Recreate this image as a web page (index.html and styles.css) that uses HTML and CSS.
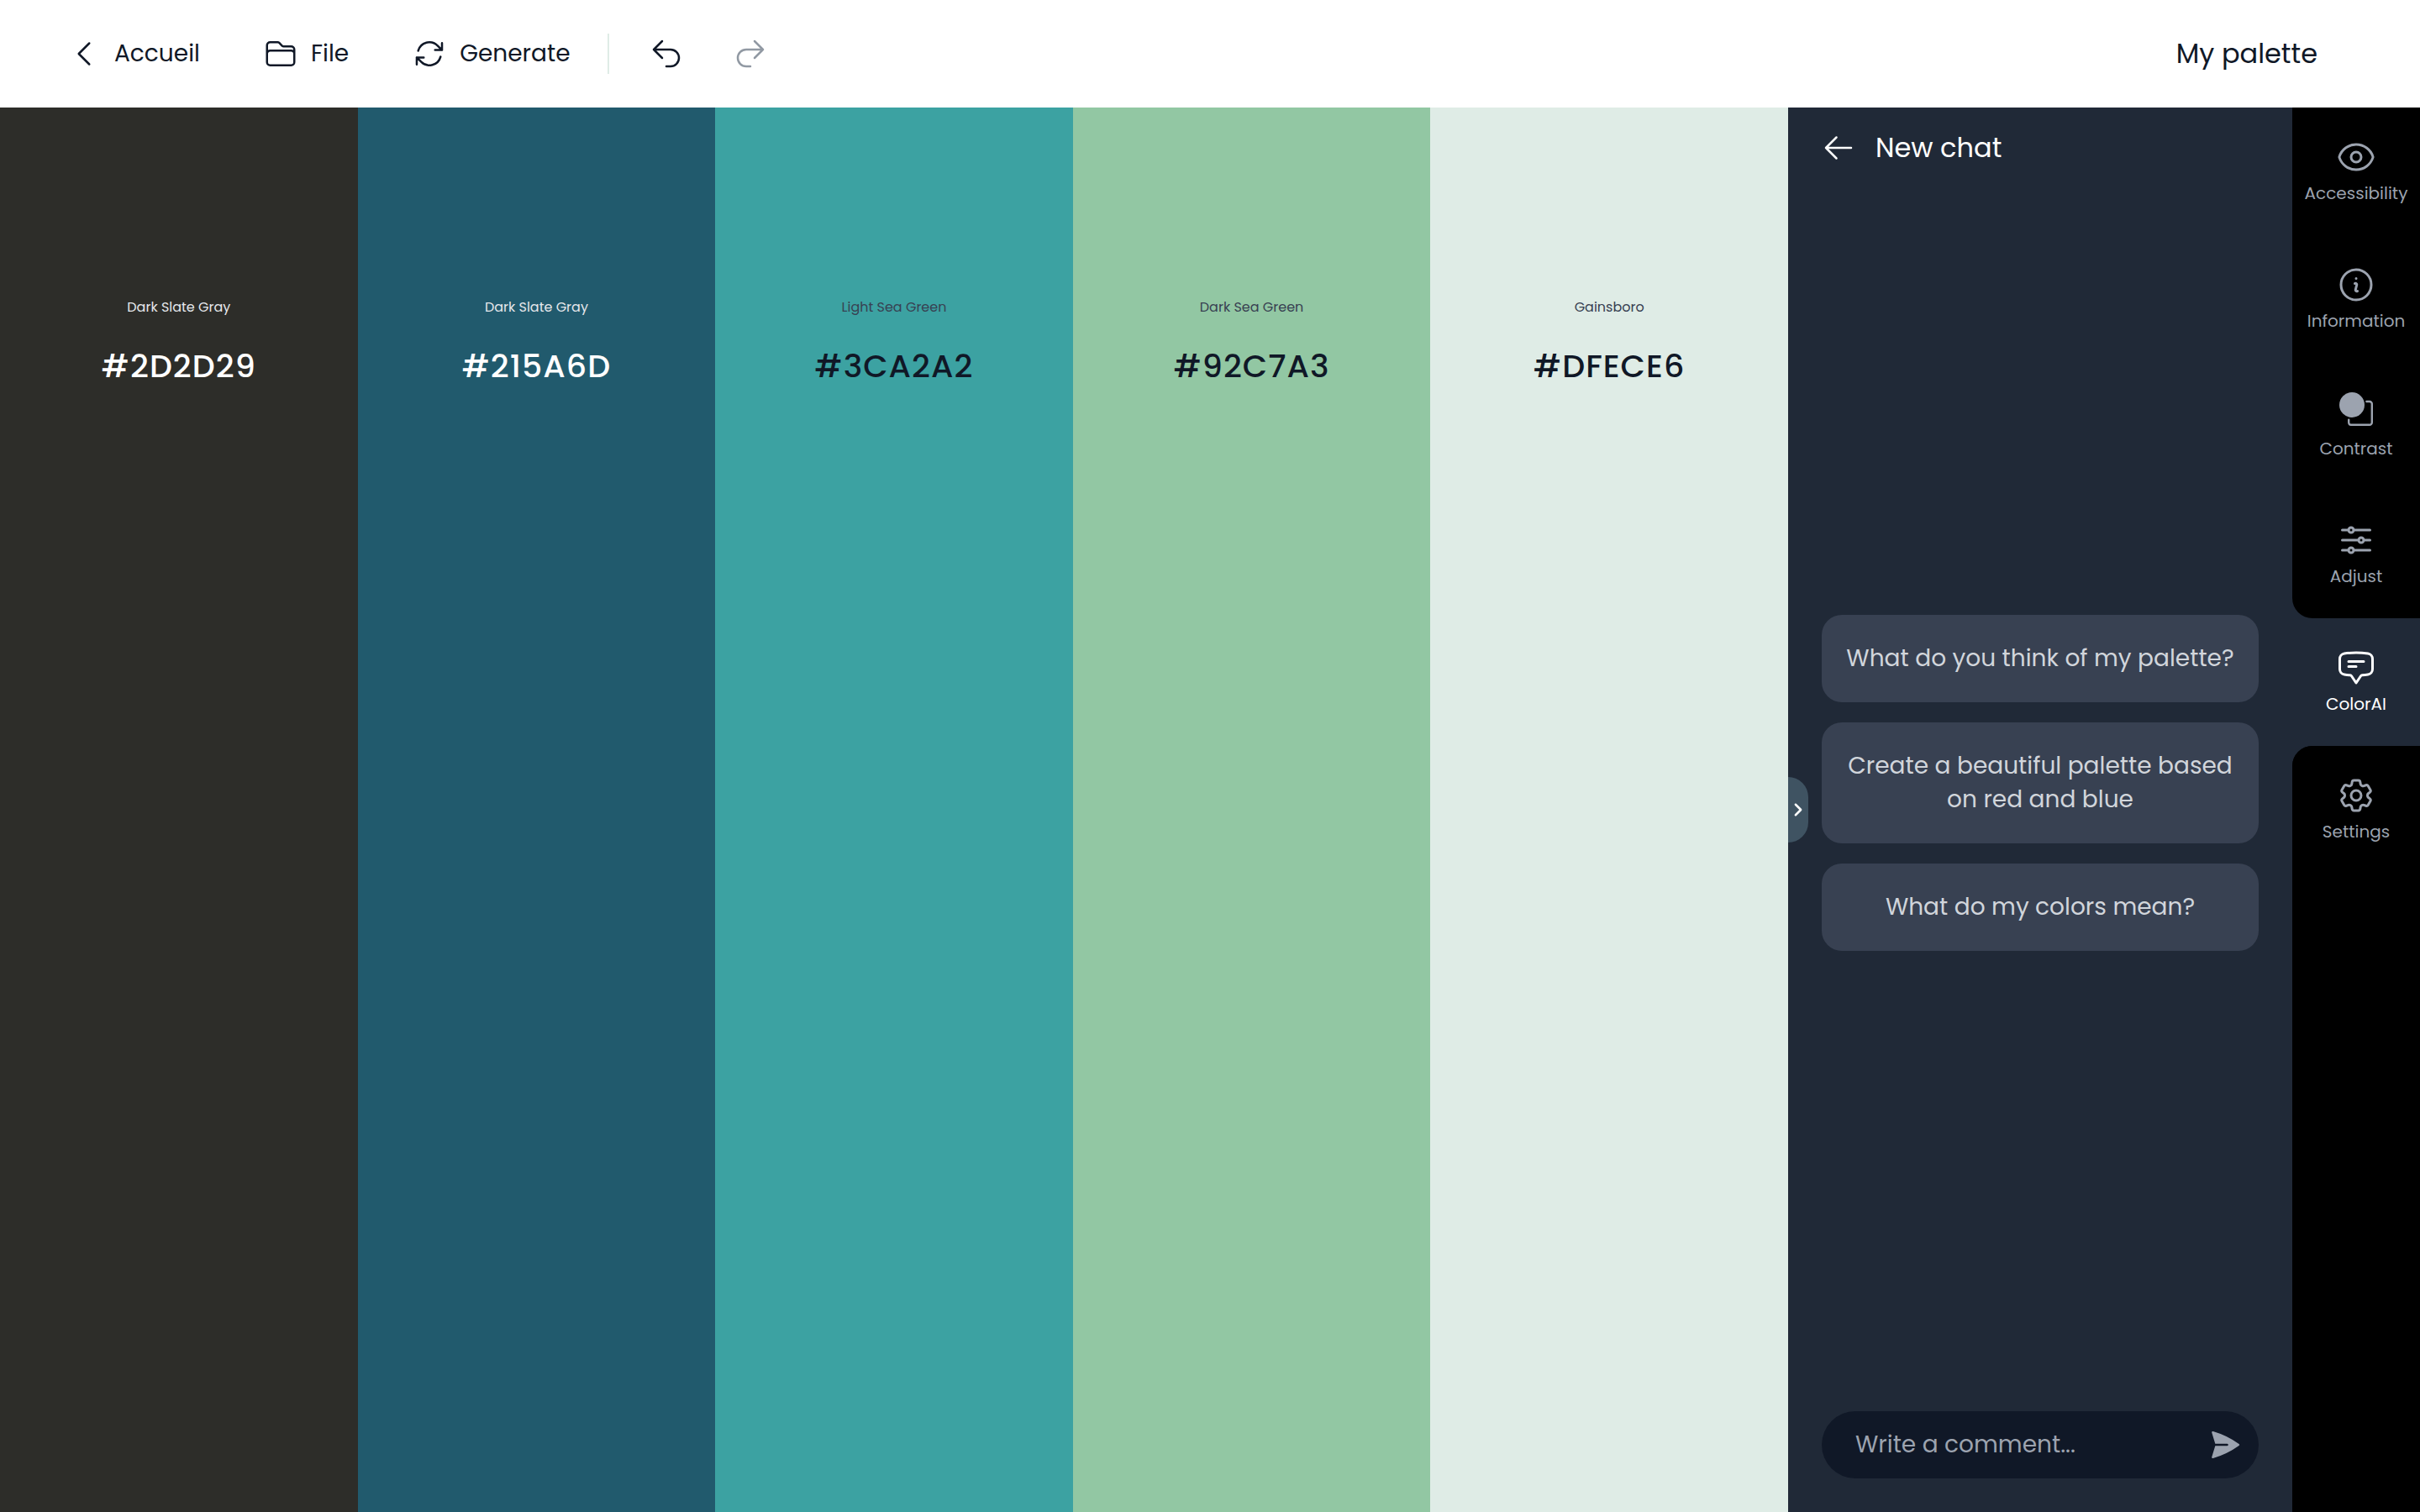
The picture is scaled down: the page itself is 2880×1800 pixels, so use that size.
FILE: index.html
```html
<!DOCTYPE html>
<html lang="en">
<head>
<meta charset="utf-8">
<meta name="viewport" content="width=device-width, initial-scale=1">
<title>My palette</title>
<link rel="stylesheet" href="styles.css">
</head>
<body>
<header class="topbar">
  <nav class="topbar-menu" aria-label="Main">
    <a class="menu-item" href="#">
      <svg class="icon" viewBox="0 0 24 24"><path d="M15.75 19.5 8.25 12l7.5-7.5"/></svg>
      Accueil
    </a>
    <button class="menu-item" type="button">
      <svg class="icon" viewBox="0 0 24 24"><path d="M2.25 12.75V12A2.25 2.25 0 0 1 4.5 9.75h15A2.25 2.25 0 0 1 21.75 12v.75m-8.69-6.44-2.12-2.12a1.5 1.5 0 0 0-1.061-.44H4.5A2.25 2.25 0 0 0 2.25 6v12a2.25 2.25 0 0 0 2.25 2.25h15A2.25 2.25 0 0 0 21.75 18V9a2.25 2.25 0 0 0-2.25-2.25h-5.379a1.5 1.5 0 0 1-1.06-.44Z"/></svg>
      File
    </button>
    <button class="menu-item" type="button">
      <svg class="icon" viewBox="0 0 24 24"><path d="M16.023 9.348h4.992v-.001M2.985 19.644v-4.992m0 0h4.992m-4.993 0 3.181 3.183a8.25 8.25 0 0 0 13.803-3.7M4.031 9.865a8.25 8.25 0 0 1 13.803-3.7l3.181 3.182m0-4.991v4.99"/></svg>
      Generate
    </button>
  </nav>
  <div class="history">
    <button class="history-button" type="button" aria-label="Undo">
      <svg class="icon" viewBox="0 0 24 24"><path d="M9 15 3 9m0 0 6-6M3 9h12a6 6 0 0 1 0 12h-3"/></svg>
    </button>
    <button class="history-button" type="button" aria-label="Redo" disabled>
      <svg class="icon" viewBox="0 0 24 24"><path d="m15 15 6-6m0 0-6-6m6 6H9a6 6 0 0 0 0 12h3"/></svg>
    </button>
  </div>
  <h1 class="palette-name">My palette</h1>
</header>

<div class="workspace">
  <main class="palette">
    <section class="swatch swatch-charcoal">
      <p class="swatch-name">Dark Slate Gray</p>
      <h2 class="swatch-hex">#2D2D29</h2>
    </section>
    <section class="swatch swatch-blue">
      <p class="swatch-name">Dark Slate Gray</p>
      <h2 class="swatch-hex">#215A6D</h2>
    </section>
    <section class="swatch swatch-teal">
      <p class="swatch-name">Light Sea Green</p>
      <h2 class="swatch-hex">#3CA2A2</h2>
    </section>
    <section class="swatch swatch-green">
      <p class="swatch-name">Dark Sea Green</p>
      <h2 class="swatch-hex">#92C7A3</h2>
    </section>
    <section class="swatch swatch-mist">
      <p class="swatch-name">Gainsboro</p>
      <h2 class="swatch-hex">#DFECE6</h2>
    </section>
  </main>

  <aside class="chat">
    <button class="collapse" type="button" aria-label="Collapse panel">
      <svg class="collapse-icon" viewBox="0 0 24 24"><path d="m8.25 4.5 7.5 7.5-7.5 7.5"/></svg>
    </button>
    <header class="chat-header">
      <button class="back" type="button" aria-label="Back">
        <svg class="icon" viewBox="0 0 24 24"><path d="M10.5 19.5 3 12m0 0 7.5-7.5M3 12h18"/></svg>
      </button>
      <h2 class="chat-title">New chat</h2>
    </header>
    <div class="suggestions">
      <button class="suggestion" type="button">What do you think of my palette?</button>
      <button class="suggestion" type="button">Create a beautiful palette based on red and blue</button>
      <button class="suggestion" type="button">What do my colors mean?</button>
    </div>
    <form class="composer">
      <input class="composer-input" type="text" placeholder="Write a comment..." aria-label="Write a comment">
      <button class="send" type="button" aria-label="Send">
        <svg class="icon-solid" viewBox="0 0 24 24"><path d="M3.478 2.404a.75.75 0 0 0-.926.941l2.432 7.905H13.5a.75.75 0 0 1 0 1.5H4.984l-2.432 7.905a.75.75 0 0 0 .926.94 60.519 60.519 0 0 0 18.445-8.986.75.75 0 0 0 0-1.218A60.517 60.517 0 0 0 3.478 2.404Z"/></svg>
      </button>
    </form>
  </aside>

  <nav class="rail" aria-label="Tools">
    <button class="tool" type="button">
      <svg class="tool-icon" viewBox="0 0 24 24"><path d="M2.036 12.322a1.012 1.012 0 0 1 0-.639C3.423 7.51 7.36 4.5 12 4.5c4.638 0 8.573 3.007 9.963 7.178.07.207.07.431 0 .639C20.577 16.49 16.64 19.5 12 19.5c-4.638 0-8.573-3.007-9.963-7.178Z"/><circle cx="12" cy="12" r="3"/></svg>
      Accessibility
    </button>
    <button class="tool" type="button">
      <svg class="tool-icon" viewBox="0 0 24 24"><path d="m11.25 11.25.041-.02a.75.75 0 0 1 1.063.852l-.708 2.836a.75.75 0 0 0 1.063.853l.041-.021M21 12a9 9 0 1 1-18 0 9 9 0 0 1 18 0Zm-9-3.75h.008v.008H12V8.25Z"/></svg>
      Information
    </button>
    <button class="tool" type="button">
      <svg class="tool-icon" viewBox="0 0 24 24"><circle class="solid" cx="9.5" cy="7.5" r="7.5"/><path class="thin" d="M18.2 5.5H20a1.4 1.4 0 0 1 1.4 1.4V18a1.4 1.4 0 0 1-1.4 1.4H9A1.4 1.4 0 0 1 7.6 18v-1.7"/></svg>
      Contrast
    </button>
    <button class="tool tool-before" type="button">
      <svg class="tool-icon" viewBox="0 0 24 24"><path d="M10.5 6h9.75M10.5 6a1.5 1.5 0 1 1-3 0m3 0a1.5 1.5 0 1 0-3 0M3.75 6H7.5m3 12h9.75m-9.75 0a1.5 1.5 0 0 1-3 0m3 0a1.5 1.5 0 0 0-3 0m-3.75 0H7.5m9-6h3.75m-3.75 0a1.5 1.5 0 0 1-3 0m3 0a1.5 1.5 0 0 0-3 0m-9.75 0h9.75"/></svg>
      Adjust
    </button>
    <button class="tool tool-active" type="button" aria-current="true">
      <svg class="tool-icon" viewBox="0 0 24 24"><path d="M7.5 8.25h9m-9 3H12m-9.75 1.51c0 1.6 1.123 2.994 2.707 3.227 1.129.166 2.27.293 3.423.379.35.026.67.21.865.501L12 21l2.755-4.133a1.14 1.14 0 0 1 .865-.501 48.172 48.172 0 0 0 3.423-.379c1.584-.233 2.707-1.626 2.707-3.228V6.741c0-1.602-1.123-2.995-2.707-3.228A48.394 48.394 0 0 0 12 3c-2.392 0-4.744.175-7.043.513C3.373 3.746 2.25 5.14 2.25 6.741v6.018Z"/></svg>
      ColorAI
    </button>
    <div class="rail-rest">
      <button class="tool" type="button">
        <svg class="tool-icon" viewBox="0 0 24 24"><path d="M9.594 3.94c.09-.542.56-.94 1.11-.94h2.593c.55 0 1.02.398 1.11.94l.213 1.281c.063.374.313.686.645.87.074.04.147.083.22.127.325.196.72.257 1.075.124l1.217-.456a1.125 1.125 0 0 1 1.37.49l1.296 2.247a1.125 1.125 0 0 1-.26 1.431l-1.003.827c-.293.241-.438.613-.43.992a7.723 7.723 0 0 1 0 .255c-.008.378.137.75.43.991l1.004.827c.424.35.534.955.26 1.43l-1.298 2.247a1.125 1.125 0 0 1-1.369.491l-1.217-.456c-.355-.133-.75-.072-1.076.124a6.47 6.47 0 0 1-.22.128c-.331.183-.581.495-.644.869l-.213 1.281c-.09.543-.56.94-1.11.94h-2.594c-.55 0-1.019-.398-1.11-.94l-.213-1.281c-.062-.374-.312-.686-.644-.87a6.52 6.52 0 0 1-.22-.127c-.325-.196-.72-.257-1.076-.124l-1.217.456a1.125 1.125 0 0 1-1.369-.49l-1.297-2.247a1.125 1.125 0 0 1 .26-1.431l1.004-.827c.292-.24.437-.613.43-.991a6.932 6.932 0 0 1 0-.255c.007-.38-.138-.751-.43-.992l-1.004-.827a1.125 1.125 0 0 1-.26-1.43l1.297-2.247a1.125 1.125 0 0 1 1.37-.491l1.216.456c.356.133.751.072 1.076-.124.072-.044.146-.086.22-.128.332-.183.582-.495.644-.869l.214-1.28Z"/><circle cx="12" cy="12" r="3"/></svg>
        Settings
      </button>
    </div>
  </nav>
</div>
</body>
</html>
```

FILE: styles.css
```css
*,
*::before,
*::after {
  box-sizing: border-box;
}

body {
  margin: 0;
  min-height: 100vh;
  display: flex;
  flex-direction: column;
  font-family: Poppins, Inter, "Liberation Sans", sans-serif;
  font-size: 28px;
  line-height: 40px;
  color: #101827;
  background: #ffffff;
}

h1,
h2,
p {
  margin: 0;
  font-weight: 400;
}

button,
input {
  margin: 0;
  padding: 0;
  border: 0;
  background: none;
  font: inherit;
  color: inherit;
}

button {
  cursor: pointer;
}

a {
  color: inherit;
  text-decoration: none;
}

svg {
  display: block;
  flex: none;
  fill: none;
  stroke: currentColor;
  stroke-width: 1.5;
  stroke-linecap: round;
  stroke-linejoin: round;
}

.icon,
.icon-solid {
  width: 40px;
  height: 40px;
}

.icon-solid {
  fill: currentColor;
  stroke: none;
}

/* Top bar */

.topbar {
  display: flex;
  align-items: center;
  min-height: 128px;
  padding: 0 122px 0 80px;
}

.topbar-menu {
  display: flex;
  gap: 76px;
}

.menu-item {
  display: flex;
  align-items: center;
  gap: 16px;
}

.history {
  display: flex;
  align-items: center;
  gap: 60px;
  height: 48px;
  margin-left: 44px;
  padding-left: 48px;
  border-left: 2px solid #dfece6;
}

.history-button:disabled {
  color: #9199a3;
}

.palette-name {
  margin-left: auto;
  font-size: 32px;
}

/* Workspace */

.workspace {
  flex: 1;
  display: grid;
  grid-template-columns: minmax(0, 1fr) 600px 152px;
}

.palette {
  display: flex;
}

.swatch {
  flex: 1;
  display: flex;
  flex-direction: column;
  align-items: center;
  gap: 30px;
  padding-top: 226px;
}

.swatch-name {
  font-size: 16px;
  line-height: 24px;
}

.swatch-hex {
  font-size: 38px;
  line-height: 56px;
  font-weight: 500;
  letter-spacing: 1px;
}

.swatch-charcoal {
  color: #ffffff;
  background: #2d2d29;
}

.swatch-blue {
  color: #ffffff;
  background: #215a6d;
}

.swatch-teal {
  background: #3ca2a2;
}

.swatch-green {
  background: #92c7a3;
}

.swatch-mist {
  background: #dfece6;
}

.swatch-charcoal .swatch-name,
.swatch-blue .swatch-name {
  color: #e5e7eb;
}

.swatch-teal .swatch-name,
.swatch-green .swatch-name,
.swatch-mist .swatch-name {
  color: #384152;
}

/* Chat panel */

.chat {
  position: relative;
  display: flex;
  flex-direction: column;
  padding-bottom: 40px;
  background: #202937;
}

.collapse {
  position: absolute;
  top: 50%;
  left: 0;
  display: grid;
  place-items: center;
  width: 24px;
  height: 78px;
  margin-top: -39px;
  border-radius: 0 24px 24px 0;
  color: #ffffff;
  background: #3f5362;
}

.collapse-icon {
  width: 20px;
  height: 20px;
  stroke-width: 3;
}

.chat-header {
  display: flex;
  align-items: center;
  gap: 24px;
  height: 96px;
  padding: 0 40px;
  color: #ffffff;
}

.chat-title {
  font-size: 32px;
}

.suggestions {
  flex: 1;
  display: flex;
  flex-direction: column;
  justify-content: center;
  gap: 24px;
  padding: 0 40px 40px;
}

.suggestion {
  padding: 32px 24px;
  border-radius: 24px;
  color: #d1d5db;
  background: #384152;
}

.composer {
  display: flex;
  align-items: center;
  height: 80px;
  margin: 0 40px;
  padding: 0 20px 0 40px;
  border-radius: 40px;
  color: #9ca3af;
  background: #101827;
}

.composer-input {
  flex: 1;
  min-width: 0;
  outline: 0;
}

.composer-input::placeholder {
  color: #9ca3af;
  opacity: 1;
}

/* Tool rail */

.rail {
  display: flex;
  flex-direction: column;
  color: #9ca3af;
  background: #202937;
}

.tool {
  display: flex;
  flex-direction: column;
  align-items: center;
  justify-content: center;
  gap: 4px;
  width: 100%;
  height: 152px;
  font-size: 20px;
  line-height: 30px;
  background: #000000;
}

.tool-icon {
  width: 48px;
  height: 48px;
}

.solid {
  fill: currentColor;
  stroke: none;
}

.thin {
  stroke-width: 1.2;
}

.tool-before {
  border-bottom-left-radius: 24px;
}

.tool-active {
  color: #ffffff;
  background: none;
}

.rail-rest {
  flex: 1;
  border-top-left-radius: 24px;
  overflow: hidden;
  background: #000000;
}
```
